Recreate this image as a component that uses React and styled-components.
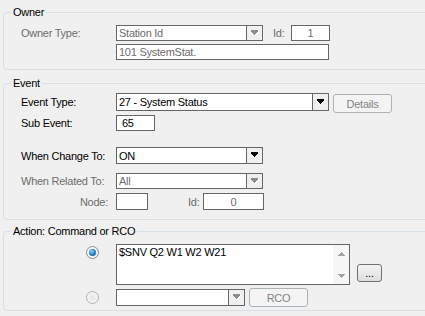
import React from 'react';
import styled, { createGlobalStyle, css } from 'styled-components';

const GlobalStyle = createGlobalStyle`
  html, body {
    margin: 0;
    padding: 0;
    background: #f0f0f0;
    overflow: hidden;
  }
  body {
    font-family: "Liberation Sans", Arial, sans-serif;
    font-size: 11px;
    letter-spacing: -0.25px;
    color: #000;
  }
`;

const Page = styled.div`
  width: 425px;
  height: 316px;
  overflow: hidden;
`;

const Group = styled.div`
  position: relative;
  width: 440px;
  margin: ${p => p.$top}px 0 0 3px;
  padding: ${p => p.$padTop}px 0 ${p => p.$padBottom}px 17px;
  border: 1px solid #d5dfe5;
  border-radius: 4px;
  box-sizing: border-box;
`;

const Legend = styled.span`
  position: absolute;
  top: -8px;
  left: 7px;
  padding: 0 2px;
  line-height: 14px;
  background: #f0f0f0;
`;

const Row = styled.div`
  display: flex;
  align-items: center;
  height: ${p => p.$h}px;
  margin-top: ${p => p.$mt || 0}px;
`;

const Label = styled.span`
  width: 95px;
  flex: none;
  color: ${p => (p.$disabled ? '#6d6d6d' : '#000')};
  text-align: ${p => (p.$right ? 'right' : 'left')};
  padding-right: ${p => (p.$right ? 8 : 0)}px;
  box-sizing: border-box;
  white-space: nowrap;
`;

const SmallLabel = styled.span`
  color: ${p => (p.$disabled ? '#6d6d6d' : '#000')};
  margin-left: ${p => p.$ml}px;
  width: ${p => p.$w}px;
  flex: none;
`;

const Box = styled.div`
  display: flex;
  align-items: center;
  width: ${p => p.$w}px;
  height: ${p => p.$h}px;
  margin-left: ${p => p.$ml || 0}px;
  box-sizing: border-box;
  border: 1px solid #666;
  background: #fff;
  flex: none;
  color: ${p => (p.$disabled ? '#6d6d6d' : '#000')};
  padding-left: ${p => (p.$center ? 0 : p.$pl ?? 2)}px;
  justify-content: ${p => (p.$center ? 'center' : 'flex-start')};
  white-space: nowrap;
  overflow: hidden;
`;

const ComboValue = styled.span`
  flex: 1;
  padding-left: 2px;
  overflow: hidden;
`;

const DropBtn = styled.span`
  width: 15px;
  height: 100%;
  flex: none;
  display: flex;
  align-items: center;
  justify-content: center;
  border-left: 1px solid #666;
  background: #f0f0f0;
`;

const PushButton = styled.div`
  width: ${p => p.$w}px;
  height: ${p => p.$h}px;
  margin-left: ${p => p.$ml}px;
  margin-top: ${p => p.$mt || 0}px;
  align-self: ${p => p.$self || 'center'};
  box-sizing: border-box;
  display: flex;
  align-items: center;
  justify-content: center;
  border-radius: 3px;
  flex: none;
  ${p =>
    p.$disabled
      ? css`
          border: 1px solid #adb2b5;
          background: #f4f4f4;
          color: #838383;
        `
      : css`
          border: 1px solid #707070;
          background: linear-gradient(#f4f4f4, #dedede);
          color: #000;
        `}
`;

const RadioCell = styled.div`
  width: 95px;
  flex: none;
  display: flex;
  justify-content: flex-end;
  padding-right: 17px;
  box-sizing: border-box;
  align-self: ${p => p.$self || 'center'};
  margin-top: ${p => p.$mt || 0}px;
`;

const Radio = styled.span`
  position: relative;
  width: 13px;
  height: 13px;
  box-sizing: border-box;
  border-radius: 50%;
  border: 1px solid ${p => (p.$checked ? '#8a8c8e' : '#b0b2b4')};
  background: radial-gradient(circle at 50% 50%, #e4e4e4 0%, #f6f6f6 70%);
  &::after {
    content: '';
    display: ${p => (p.$checked ? 'block' : 'none')};
    position: absolute;
    left: 2px;
    top: 2px;
    width: 7px;
    height: 7px;
    border-radius: 50%;
    background: radial-gradient(circle at 40% 35%, #9ad6ff 0%, #2b86cf 45%, #0d4f8e 100%);
  }
`;

const TextArea = styled.div`
  display: flex;
  width: 234px;
  height: 41px;
  box-sizing: border-box;
  border: 1px solid #666;
  background: #fff;
  flex: none;
`;

const TextBody = styled.div`
  flex: 1;
  padding: 1px 0 0 2px;
  line-height: 13px;
  white-space: nowrap;
`;

const ScrollCol = styled.div`
  width: 16px;
  display: flex;
  flex-direction: column;
  justify-content: space-between;
  background: #f6f6f6;
`;

const ScrollBtn = styled.span`
  height: 17px;
  display: flex;
  align-items: center;
  justify-content: center;
`;

const Arrow = ({ disabled }) => (
  <svg width="8" height="7" viewBox="0 0 8 7" shapeRendering="crispEdges">
    {disabled && <polygon points="1,1 8,1 8,2 4.5,6 1,2" fill="#fff" />}
    <polygon points="0,0 7,0 7,1.5 3.5,5.5 0,1.5" fill={disabled ? '#8c8c8c' : '#000'} />
  </svg>
);

const ScrollArrow = ({ up }) => (
  <svg width="7" height="4" viewBox="0 0 7 4" shapeRendering="crispEdges">
    <polygon points={up ? '3.5,0 7,4 0,4' : '0,0 7,0 3.5,4'} fill="#a3a3a3" />
  </svg>
);

const Combo = ({ w, h, value, disabled }) => (
  <Box $w={w} $h={h} $pl={0} $disabled={disabled}>
    <ComboValue>{value}</ComboValue>
    <DropBtn>
      <Arrow disabled={disabled} />
    </DropBtn>
  </Box>
);

export default function App() {
  return (
    <Page>
      <GlobalStyle />
      <Group $top={12} $padTop={12} $padBottom={9}>
        <Legend>Owner</Legend>
        <Row $h={16}>
          <Label $disabled>Owner Type:</Label>
          <Combo w={147} h={16} value="Station Id" disabled />
          <SmallLabel $disabled $ml={10} $w={18}>Id:</SmallLabel>
          <Box $w={39} $h={16} $center $disabled>1</Box>
        </Row>
        <Row $h={16} $mt={3}>
          <Label />
          <Box $w={213} $h={16} $disabled>101 SystemStat.</Box>
        </Row>
      </Group>

      <Group $top={13} $padTop={9} $padBottom={9}>
        <Legend>Event</Legend>
        <Row $h={18}>
          <Label>Event Type:</Label>
          <Combo w={213} h={18} value="27 - System Status" />
          <PushButton $disabled $w={59} $h={19} $ml={4} $self="flex-start" $mt={1}>Details</PushButton>
        </Row>
        <Row $h={16} $mt={4}>
          <Label>Sub Event:</Label>
          <Box $w={39} $h={16} $pl={5}>65</Box>
        </Row>
        <Row $h={17} $mt={16}>
          <Label>When Change To:</Label>
          <Combo w={147} h={17} value="ON" />
        </Row>
        <Row $h={16} $mt={9}>
          <Label $disabled>When Related To:</Label>
          <Combo w={147} h={16} value="All" disabled />
        </Row>
        <Row $h={17} $mt={4}>
          <Label $disabled $right>Node:</Label>
          <Box $w={32} $h={17} />
          <SmallLabel $disabled $ml={40} $w={15}>Id:</SmallLabel>
          <Box $w={61} $h={17} $center $disabled>0</Box>
        </Row>
      </Group>

      <Group $top={11} $padTop={12} $padBottom={4}>
        <Legend>Action: Command or RCO</Legend>
        <Row $h={41}>
          <RadioCell $self="flex-start" $mt={2}>
            <Radio $checked />
          </RadioCell>
          <TextArea>
            <TextBody>$SNV Q2 W1 W2 W21</TextBody>
            <ScrollCol>
              <ScrollBtn><ScrollArrow up /></ScrollBtn>
              <ScrollBtn><ScrollArrow /></ScrollBtn>
            </ScrollCol>
          </TextArea>
          <PushButton $w={25} $h={18} $ml={7} $self="flex-start" $mt={20}>...</PushButton>
        </Row>
        <Row $h={17} $mt={4}>
          <RadioCell>
            <Radio />
          </RadioCell>
          <Combo w={129} h={17} value="" disabled />
          <PushButton $disabled $w={59} $h={19} $ml={4}>RCO</PushButton>
        </Row>
      </Group>
    </Page>
  );
}
